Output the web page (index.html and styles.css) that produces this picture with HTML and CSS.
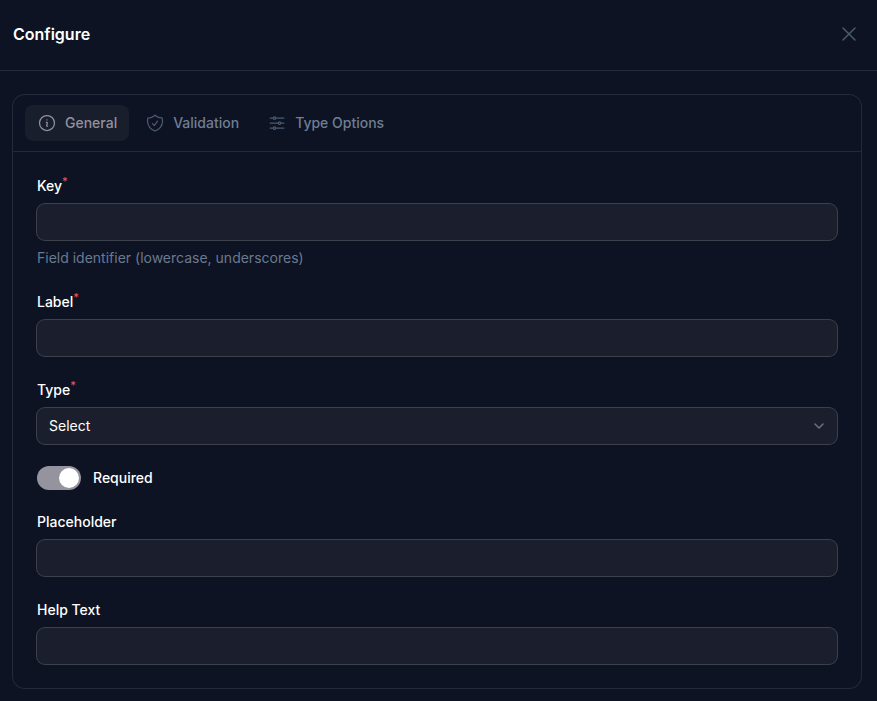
FILE: index.html
```html
<!doctype html>
<html lang="en">
  <head>
    <meta charset="UTF-8" />
    <meta name="viewport" content="width=device-width, initial-scale=1.0" />
    <title>Configure</title>
    <link rel="stylesheet" href="styles.css">
  </head>
  <body>
    <!-- Header -->
    <header class="header">
      <h1>Configure</h1>
      <button type="button" class="close-btn" aria-label="Close">
        <svg viewBox="0 0 24 24"><path d="M6 18 18 6M6 6l12 12" /></svg>
      </button>
    </header>

    <main class="content">
      <form class="card">
        <!-- Tabs -->
        <nav class="tabs">
          <button type="button" class="tab active">
            <svg viewBox="0 0 24 24">
              <path d="m11.25 11.25.041-.02a.75.75 0 0 1 1.063.852l-.708 2.836a.75.75 0 0 0 1.063.853l.041-.021M21 12a9 9 0 1 1-18 0 9 9 0 0 1 18 0Zm-9-3.75h.008v.008H12V8.25Z" />
            </svg>
            General
          </button>
          <button type="button" class="tab">
            <svg viewBox="0 0 24 24">
              <path d="M9 12.75 11.25 15 15 9.75m-3-7.036A11.959 11.959 0 0 1 3.598 6 11.99 11.99 0 0 0 3 9.749c0 5.592 3.824 10.29 9 11.623 5.176-1.332 9-6.03 9-11.622 0-1.31-.21-2.571-.598-3.751h-.152c-3.196 0-6.1-1.248-8.25-3.285Z" />
            </svg>
            Validation
          </button>
          <button type="button" class="tab">
            <svg viewBox="0 0 24 24">
              <path d="M10.5 6h9.75M10.5 6a1.5 1.5 0 1 1-3 0m3 0a1.5 1.5 0 1 0-3 0M3.75 6H7.5m3 12h9.75m-9.75 0a1.5 1.5 0 0 1-3 0m3 0a1.5 1.5 0 0 0-3 0m-3.75 0H7.5m9-6h3.75m-3.75 0a1.5 1.5 0 0 1-3 0m3 0a1.5 1.5 0 0 0-3 0m-9.75 0h9.75" />
            </svg>
            Type Options
          </button>
        </nav>

        <!-- Fields -->
        <div class="fields">
          <div class="field">
            <label for="key">Key<sup>*</sup></label>
            <input type="text" id="key" class="control" required />
            <p class="hint">Field identifier (lowercase, underscores)</p>
          </div>

          <div class="field">
            <label for="label">Label<sup>*</sup></label>
            <input type="text" id="label" class="control" required />
          </div>

          <div class="field">
            <label for="type">Type<sup>*</sup></label>
            <div class="select">
              <select id="type" class="control" required>
                <option>Select</option>
              </select>
              <svg viewBox="0 0 20 20"><path d="m6 8 4 4 4-4" /></svg>
            </div>
          </div>

          <div class="toggle-row">
            <input type="checkbox" role="switch" id="required" class="toggle" checked />
            <label for="required">Required</label>
          </div>

          <div class="field">
            <label for="placeholder">Placeholder</label>
            <input type="text" id="placeholder" class="control" />
          </div>

          <div class="field">
            <label for="help">Help Text</label>
            <input type="text" id="help" class="control" />
          </div>
        </div>
      </form>
    </main>
  </body>
</html>
```
FILE: styles.css
```css
* {
  margin: 0;
  padding: 0;
  box-sizing: border-box;
}

body {
  font-family: Inter, "Liberation Sans", sans-serif;
  font-size: 14px;
  line-height: 20px;
  background: #0d1322;
  color: #fff;
}

button,
input,
select {
  font: inherit;
  color: inherit;
  border: none;
}

svg {
  fill: none;
  stroke: currentColor;
  stroke-width: 1.5;
  stroke-linecap: round;
  stroke-linejoin: round;
}

.header {
  display: flex;
  align-items: center;
  justify-content: space-between;
  padding: 22px 16px 24px 13px;
  border-bottom: 1px solid #252a36;
}

.header h1 {
  font-size: 16px;
  line-height: 24px;
  font-weight: 600;
}

.close-btn {
  display: flex;
  background: none;
  color: #4b5a70;
  cursor: pointer;
}

.close-btn svg {
  width: 24px;
  height: 24px;
}

.content {
  padding: 24px 16px 12px 13px;
}

.card {
  border-radius: 12px;
  box-shadow: 0 0 0 1px #252a36;
}

/* Tabs */
.tabs {
  display: flex;
  gap: 4px;
  padding: 10px 12px;
  border-bottom: 1px solid #252a36;
}

.tab {
  display: flex;
  align-items: center;
  gap: 8px;
  padding: 8px 12px;
  border-radius: 8px;
  background: none;
  color: #6f7e95;
  font-weight: 500;
  cursor: pointer;
}

.tab svg {
  width: 20px;
  height: 20px;
  color: #4b5a70;
}

.tab.active,
.tab.active svg {
  color: #93919e;
}

.tab.active {
  background: #191e2c;
}

/* Fields */
.fields {
  display: grid;
  gap: 24px;
  padding: 24px;
}

.field {
  display: grid;
  gap: 8px;
}

label {
  font-weight: 500;
}

label sup {
  font-size: 11px;
  line-height: 0;
  color: #f0525a;
}

.control {
  width: 100%;
  height: 36px;
  padding: 0 12px;
  border-radius: 8px;
  background: #1b1f2d;
  box-shadow: 0 0 0 1px #3c404b;
  outline: none;
}

.hint {
  color: #6a7990;
}

.select {
  display: grid;
  position: relative;
}

.select select {
  appearance: none;
}

.select svg {
  position: absolute;
  top: 8px;
  right: 8px;
  width: 20px;
  height: 20px;
  color: #6b7280;
  pointer-events: none;
}

/* Toggle */
.toggle-row {
  display: flex;
  align-items: center;
  gap: 12px;
  height: 20px;
}

.toggle {
  appearance: none;
  display: flex;
  width: 44px;
  height: 24px;
  padding: 2px;
  border-radius: 12px;
  background: #4b5563;
  cursor: pointer;
}

.toggle::before {
  content: "";
  width: 20px;
  height: 20px;
  border-radius: 50%;
  background: #fff;
}

.toggle:checked {
  justify-content: flex-end;
  background: #95939e;
}
```
